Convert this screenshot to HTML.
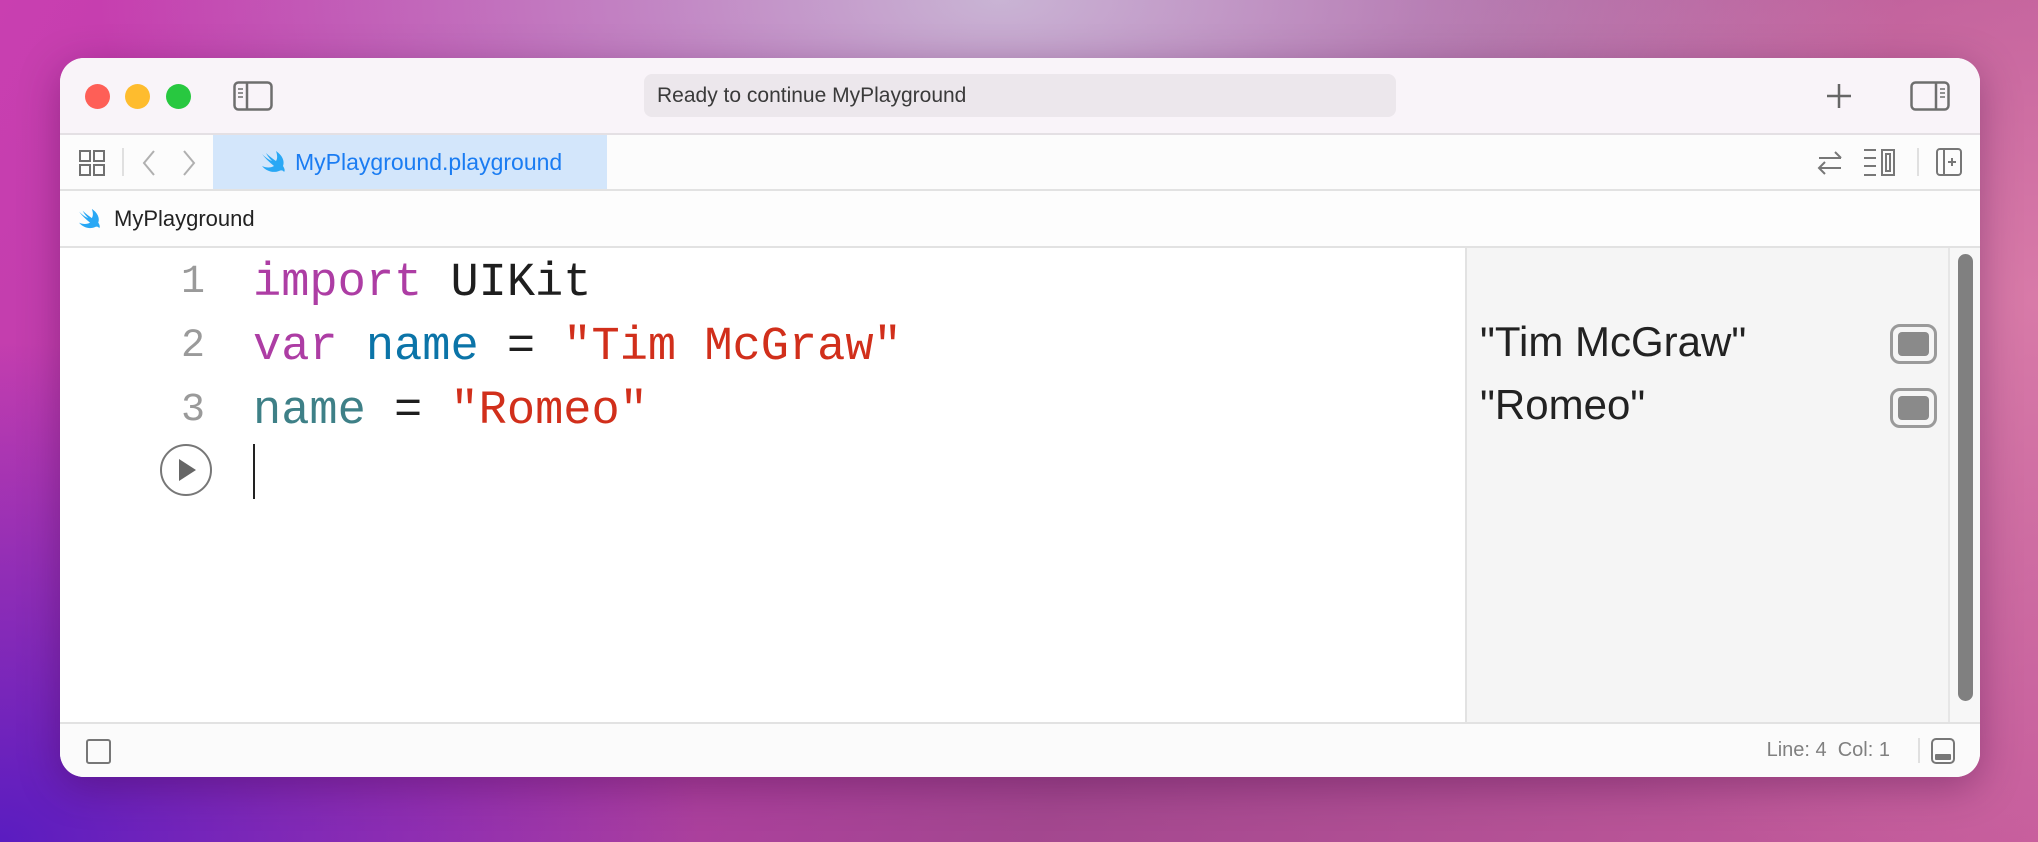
<!DOCTYPE html>
<html><head><meta charset="utf-8"><style>
*{margin:0;padding:0;box-sizing:border-box}
body{width:2038px;height:842px;overflow:hidden;position:relative;font-family:"Liberation Sans",sans-serif;
background:
radial-gradient(ellipse 700px 500px at 0px 842px,#5a1cc0 0%,rgba(90,28,192,0) 100%),
radial-gradient(ellipse 900px 400px at 1000px 0px,#c9b4d4 0%,rgba(201,180,212,0) 100%),
radial-gradient(ellipse 700px 600px at 2038px 300px,#d87aa8 0%,rgba(216,122,168,0) 100%),
linear-gradient(120deg,#c93fb0 0%,#b23aa8 35%,#a3478f 60%,#c65c9c 100%);}
.win{position:absolute;left:60px;top:58px;width:1920px;height:719px;border-radius:24px;overflow:hidden;background:#fff;box-shadow:0 10px 40px rgba(60,0,60,.35)}
.title{position:absolute;left:0;top:0;width:100%;height:77px;background:#f9f4f9;border-bottom:2px solid #e4e0e4}
.tl{position:absolute;top:26px;width:25px;height:25px;border-radius:50%}
.pill{position:absolute;left:584px;top:16px;width:752px;height:43px;border-radius:8px;background:#ece7ec;font-size:21px;color:#3a3a3a;line-height:43px;padding-left:13px}
.tabs{position:absolute;left:0;top:77px;width:100%;height:56px;background:#fcfcfc;border-bottom:2px solid #e2e2e2}
.tab{position:absolute;left:153px;top:0;width:394px;height:54px;background:#d3e6fb;color:#1a7cf2;font-size:23px;line-height:54px;padding-left:82px}
.jump{position:absolute;left:0;top:133px;width:100%;height:57px;background:#fdfdfd;border-bottom:2px solid #e2e2e2;font-size:22px;color:#222;line-height:55px}
.ed{position:absolute;left:0;top:190px;width:1405px;height:474px;background:#fff}
.res{position:absolute;left:1405px;top:190px;width:485px;height:474px;background:#f5f5f5;border-left:2px solid #e2e2e2;border-right:2px solid #e6e6e6}
.sb{position:absolute;left:1890px;top:190px;width:30px;height:474px;background:#f7f7f7}
.code{position:absolute;font-family:"Liberation Mono",monospace;font-size:47px;line-height:64px;white-space:pre;color:#1e1e1e}
.ln{position:absolute;font-family:"Liberation Mono",monospace;font-size:40px;color:#9a9a9a;width:100px;text-align:right;left:45px}
.k{color:#ad3da4}.s{color:#d12f1b}.v{color:#0b74a8}.t{color:#3e8087}
.rt{position:absolute;left:13px;font-size:42px;color:#222;letter-spacing:0}
.ql{position:absolute;left:423px;width:47px;height:40px;border:3px solid #9a9a9a;border-radius:10px}
.ql:after{content:"";position:absolute;left:5px;top:5px;right:5px;bottom:5px;background:#8a8a8a;border-radius:4px}
.bot{position:absolute;left:0;top:664px;width:100%;height:55px;background:#fbfbfb;border-top:2px solid #e2e2e2}
</style></head><body>
<div class="win">
 <div class="title">
  <div class="tl" style="left:25px;background:#fe5f57"></div>
  <div class="tl" style="left:65px;background:#febc2e"></div>
  <div class="tl" style="left:106px;background:#28c840"></div>
  <svg style="position:absolute;left:173px;top:23px" width="40" height="30" viewBox="0 0 40 30" fill="none" stroke="#6e6e6e" stroke-width="2.5"><rect x="1.5" y="1.5" width="37" height="27" rx="4"/><line x1="14" y1="2" x2="14" y2="28"/><line x1="5" y1="8" x2="10" y2="8" stroke-width="1.5"/><line x1="5" y1="12" x2="10" y2="12" stroke-width="1.5"/><line x1="5" y1="16" x2="10" y2="16" stroke-width="1.5"/></svg>
  <div class="pill">Ready to continue MyPlayground</div>
  <svg style="position:absolute;left:1765px;top:24px" width="28" height="28" viewBox="0 0 28 28" stroke="#666" stroke-width="2.5"><line x1="14" y1="2" x2="14" y2="26"/><line x1="2" y1="14" x2="26" y2="14"/></svg>
  <svg style="position:absolute;left:1850px;top:23px" width="40" height="30" viewBox="0 0 40 30" fill="none" stroke="#6e6e6e" stroke-width="2.5"><rect x="1.5" y="1.5" width="37" height="27" rx="4"/><line x1="26" y1="2" x2="26" y2="28"/><line x1="30" y1="8" x2="35" y2="8" stroke-width="1.5"/><line x1="30" y1="12" x2="35" y2="12" stroke-width="1.5"/><line x1="30" y1="16" x2="35" y2="16" stroke-width="1.5"/></svg>
 </div>
 <div class="tabs">
  <svg style="position:absolute;left:19px;top:15px" width="26" height="26" viewBox="0 0 26 26" fill="none" stroke="#707070" stroke-width="2"><rect x="1" y="1" width="10" height="10"/><rect x="15" y="1" width="10" height="10"/><rect x="1" y="15" width="10" height="10"/><rect x="15" y="15" width="10" height="10"/></svg>
  <div style="position:absolute;left:62px;top:13px;width:2px;height:28px;background:#e0e0e0"></div>
  <svg style="position:absolute;left:80px;top:14px" width="70" height="28" viewBox="0 0 70 28" fill="none" stroke="#b0b0b0" stroke-width="2"><polyline points="14,2 4,14 14,26"/><polyline points="44,2 54,14 44,26"/></svg>
  <div class="tab"><svg style="position:absolute;left:48px;top:15px" width="26" height="24" viewBox="0 0 26 24"><path d="M15 1c6 4 9 10 7 15 2 3 2 5 1 6-1-2-3-2-5-1-5 2-12 1-17-5 4 2 9 2 12 0C8 12 4 8 1 4c3 3 7 6 10 7C8 8 6 5 5 3c3 3 7 6 10 8 2-3 1-7 0-10z" fill="#29a8f5"/></svg>MyPlayground.playground</div>
  <svg style="position:absolute;left:1755px;top:14px" width="30" height="28" viewBox="0 0 30 28" fill="none" stroke="#777" stroke-width="2"><path d="M4 9h22M20 3l6 6M26 19H4M10 13l-6 6 6 6"/></svg>
  <svg style="position:absolute;left:1803px;top:13px" width="36" height="30" viewBox="0 0 36 30" fill="none" stroke="#777" stroke-width="2"><path d="M1 2h12M1 10h12M1 18h12M1 27h12"/><rect x="19" y="2" width="12" height="25"/><rect x="23" y="6" width="4" height="17"/></svg>
  <div style="position:absolute;left:1857px;top:13px;width:2px;height:28px;background:#e0e0e0"></div>
  <svg style="position:absolute;left:1876px;top:13px" width="26" height="28" viewBox="0 0 26 28" fill="none" stroke="#777" stroke-width="2"><rect x="1" y="1" width="24" height="26" rx="3"/><line x1="8" y1="1" x2="8" y2="27"/><path d="M16 10v8M12 14h8"/></svg>
 </div>
 <div class="jump"><svg style="position:absolute;left:18px;top:17px" width="24" height="22" viewBox="0 0 26 24"><path d="M15 1c6 4 9 10 7 15 2 3 2 5 1 6-1-2-3-2-5-1-5 2-12 1-17-5 4 2 9 2 12 0C8 12 4 8 1 4c3 3 7 6 10 7C8 8 6 5 5 3c3 3 7 6 10 8 2-3 1-7 0-10z" fill="#29a8f5"/></svg><span style="position:absolute;left:54px">MyPlayground</span></div>
 <div class="ed">
  <div class="ln" style="top:12px">1</div><div class="ln" style="top:76px">2</div><div class="ln" style="top:140px">3</div>
  <div class="code" style="left:193px;top:4px"><span class="k">import</span> UIKit
<span class="k">var</span> <span class="v">name</span> = <span class="s">"Tim McGraw"</span>
<span class="t">name</span> = <span class="s">"Romeo"</span></div>
  <svg style="position:absolute;left:99px;top:195px" width="54" height="54" viewBox="0 0 54 54"><circle cx="27" cy="27" r="25" fill="#fff" stroke="#777" stroke-width="2"/><path d="M20 16l17 11-17 11z" fill="#666"/></svg>
  <div style="position:absolute;left:193px;top:196px;width:2px;height:55px;background:#222"></div>
 </div>
 <div class="res">
  <div class="rt" style="top:70px">"Tim McGraw"</div>
  <div class="rt" style="top:133px">"Romeo"</div>
  <div class="ql" style="top:76px"></div>
  <div class="ql" style="top:140px"></div>
 </div>
 <div class="sb"><div style="position:absolute;left:8px;top:6px;width:15px;height:447px;border-radius:8px;background:#808080"></div></div>
 <div class="bot">
  <div style="position:absolute;left:26px;top:15px;width:25px;height:25px;border:2px solid #777;border-radius:3px"></div>
  <div style="position:absolute;right:90px;top:15px;font-size:20px;color:#808080">Line: 4&nbsp;&nbsp;Col: 1</div>
  <div style="position:absolute;left:1858px;top:14px;width:2px;height:25px;background:#e0e0e0"></div>
  <svg style="position:absolute;left:1871px;top:14px" width="24" height="26" viewBox="0 0 24 26" fill="none"><rect x="1" y="1" width="22" height="24" rx="4" stroke="#777" stroke-width="2"/><rect x="4" y="16" width="16" height="6" rx="1" fill="#777"/></svg>
 </div>
</div>
</body></html>
